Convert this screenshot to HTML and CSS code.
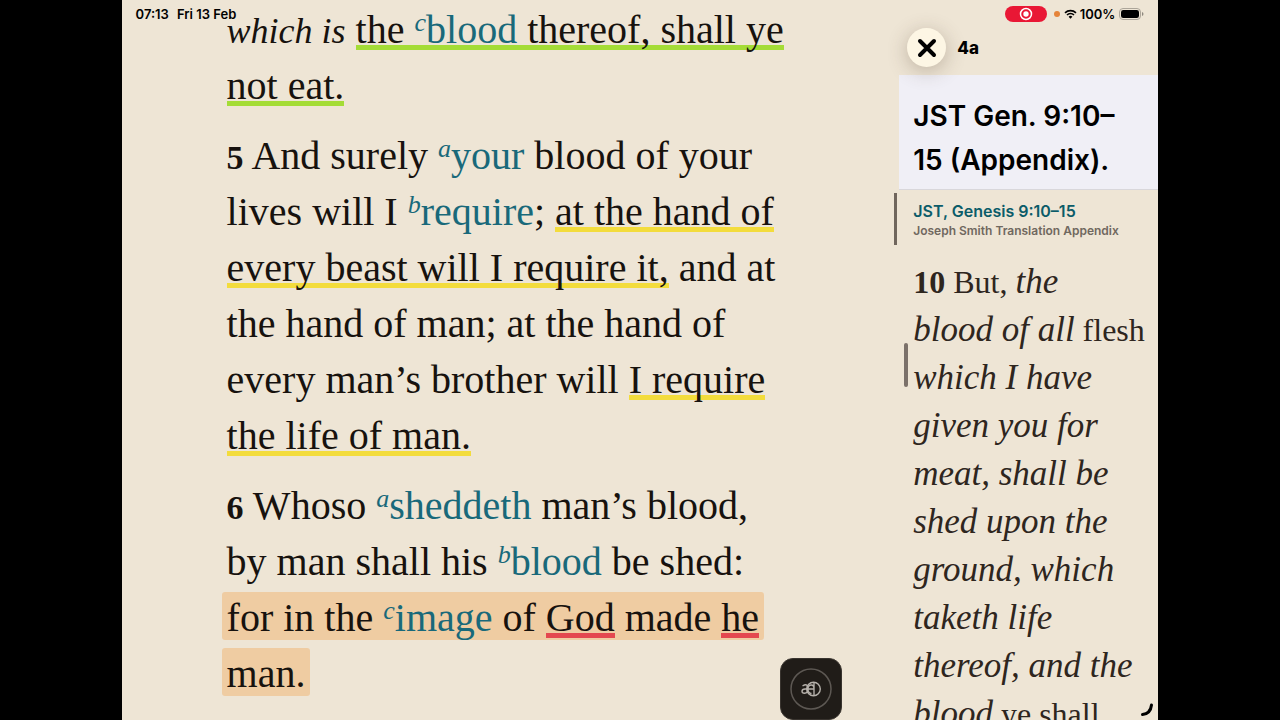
FILE: index.html
```html
<!DOCTYPE html>
<html lang="en">
<head>
    <meta charset="UTF-8">
    <meta name="viewport" content="width=device-width, initial-scale=1.0">
    <title>Genesis 9</title>
    <link rel="stylesheet" href="styles.css">
</head>
<body>
    <div class="screen">
        <div class="status-bar">
            <span class="time">07:13</span>
            <span>Fri 13 Feb</span>
            <span class="recording">
                <svg width="14" height="14" viewBox="0 0 14 14"><circle cx="7" cy="7" r="5.5" fill="none" stroke="#fff" stroke-width="1.5"/><circle cx="7" cy="7" r="2.7" fill="#fff"/></svg>
            </span>
            <span class="mic-dot"></span>
            <svg class="wifi" width="13" height="10" viewBox="0 0 13 10"><path d="M1 3.8a8 8 0 0 1 11 0M3 6a5 5 0 0 1 7 0" fill="none" stroke="#000" stroke-width="1.6"/><path d="M4.6 7.7a2.8 2.8 0 0 1 3.8 0L6.5 9.7z"/></svg>
            <span>100%</span>
            <svg class="battery" width="25" height="12" viewBox="0 0 25 12"><rect x=".5" y=".5" width="21" height="11" rx="3.5" fill="none" stroke="#aca599"/><rect x="2" y="2" width="18" height="8" rx="2.3"/><path d="M23 4v4q1.5-.6 1.5-2T23 4" fill="#8e887f"/></svg>
        </div>

        <main class="reader">
            <p class="verse"><i>which is</i> <span class="line green">the <a class="note" href="#c4"><sup>c</sup>blood</a> thereof, shall ye</span><br>
            <span class="line green">not eat.</span></p>

            <p class="verse"><b>5</b> And surely <a class="note" href="#a5"><sup>a</sup>your</a> blood of your<br>
            lives will I <a class="note" href="#b5"><sup>b</sup>require</a>; <span class="line yellow">at the hand of</span><br>
            <span class="line yellow">every beast will I require it,</span> and at<br>
            the hand of man; at the hand of<br>
            every man’s brother will <span class="line yellow">I require</span><br>
            <span class="line yellow">the life of man.</span></p>

            <p class="verse"><b>6</b> Whoso <a class="note" href="#a6"><sup>a</sup>sheddeth</a> man’s blood,<br>
            by man shall his <a class="note" href="#b6"><sup>b</sup>blood</a> be shed:<br>
            <mark>for in the <a class="note" href="#c6"><sup>c</sup>image</a> of <span class="line red">God</span> made <span class="line red">he</span></mark><br>
            <mark>man.</mark></p>
        </main>

        <aside class="panel">
            <header class="panel-bar">
                <button class="close" aria-label="Close">
                    <svg width="20" height="20" viewBox="0 0 20 20"><path d="M3 3l14 14M17 3L3 17" stroke="#000" stroke-width="4" stroke-linecap="round"/></svg>
                </button>
                <span>4a</span>
            </header>
            <h1>JST Gen. 9:10–<br>15 (Appendix).</h1>
            <div class="source">
                <a href="#jst">JST, Genesis 9:10–15</a>
                <small>Joseph Smith Translation Appendix</small>
            </div>
            <p class="passage"><b>10</b> But, <i>the<br>
            blood of all</i> flesh<br>
            <i>which I have<br>
            given you for<br>
            meat, shall be<br>
            shed upon the<br>
            ground, which<br>
            taketh life<br>
            thereof, and the<br>
            blood</i> ye shall</p>
            <span class="scrollbar"></span>
        </aside>

        <button class="assist" aria-label="Assistant">
            <svg width="42" height="42" viewBox="0 0 42 42" fill="none"><circle cx="21" cy="21" r="20" stroke="#5d5853" stroke-width="1.5"/><g stroke="#b5b0aa" stroke-width="1.4"><circle cx="23.500" cy="21" r="6.800"/><path d="M12.500 18q4-2.500 5 0v6M18 21h-3q-3 .2-3 2.200t2.500 2q3.500-.2 3.500-3.500M17 21h7q0-4-2.700-4-3.300 0-3.300 4 0 4.500 3.500 4.500M24 15v12"/></g></svg>
        </button>
        <svg class="corner" width="15" height="15" viewBox="0 0 15 15"><path d="M2.500 12.500q8-.8 9-9.500" fill="none" stroke="#000" stroke-width="3" stroke-linecap="round"/></svg>
    </div>
</body>
</html>
```
FILE: styles.css
```css
* {
    box-sizing: border-box;
}
body {
    margin: 0;
    background-color: #000;
    color: #17120e;
    font-family: Inter, "Liberation Sans", sans-serif;
}
.screen {
    position: relative;
    display: grid;
    grid-template-columns: 1fr 25%;
    width: 81%;
    height: 100vh;
    margin: 0 auto;
    overflow: hidden;
    background-color: #eee5d5;
}

/* status bar lies over the text */
.status-bar {
    position: absolute;
    z-index: 2;
    top: 0;
    left: 0;
    right: 0;
    display: flex;
    align-items: center;
    height: 28px;
    padding: 0 14px;
    color: #000;
    font-size: 13px;
    font-weight: 600;
}
.time {
    margin-right: 8px;
}
.recording {
    display: flex;
    align-items: center;
    justify-content: center;
    width: 42px;
    height: 16px;
    margin-left: auto;
    border-radius: 8px;
    background-color: #e91735;
}
.mic-dot {
    width: 6px;
    height: 6px;
    margin: 0 4px 0 7px;
    border-radius: 50%;
    background-color: #e5843a;
}
.wifi {
    margin-right: 3px;
}
.battery {
    margin-left: 4px;
}

.reader {
    padding: 2px 0 0 105px;
    font-family: "Liberation Serif", serif;
    font-size: 40px;
    line-height: 56px;
    white-space: nowrap;
}
.verse {
    margin: 0 0 14px;
}
.verse i {
    font-size: 36px;
    line-height: 0;
}
.verse b {
    font-size: 34px;
    line-height: 0;
}
.note {
    color: #19697a;
    text-decoration: none;
}
sup {
    font-size: 26px;
    font-style: italic;
    line-height: 0;
    vertical-align: 12px;
}
.line {
    background: linear-gradient(var(--ink), var(--ink)) left bottom 2px / 100% 5px no-repeat;
}
.green {
    --ink: #a4dc36;
}
.yellow {
    --ink: #f3dc3c;
}
.red {
    --ink: #e4484f;
}
mark {
    margin-left: -5px;
    padding: 3px 5px 0;
    border-radius: 3px;
    background-color: #efcca2;
    color: inherit;
}

.panel {
    position: relative;
}
.panel-bar {
    display: flex;
    align-items: center;
    gap: 11px;
    height: 75px;
    padding: 20px 8px 0;
    color: #000;
    font-size: 17px;
    font-weight: 800;
}
.close {
    display: flex;
    align-items: center;
    justify-content: center;
    width: 39px;
    height: 39px;
    padding: 0;
    border: 0;
    border-radius: 50%;
    background-color: #fdf6e4;
    box-shadow: 0 4px 20px rgba(80, 60, 40, 0.3);
}
h1 {
    margin: 0;
    padding: 19px 14px 7px;
    border-bottom: 1px solid #d9d7db;
    background-color: #f0eff6;
    color: #000;
    font-size: 28px;
    font-weight: 600;
    line-height: 44px;
    white-space: nowrap;
}
.source {
    display: flex;
    flex-direction: column;
    height: 52px;
    margin: 3px 0 0 -5px;
    padding: 7px 0 0 16px;
    border-left: 3px solid #70665d;
    white-space: nowrap;
}
.source a {
    color: #0b5c69;
    font-size: 16px;
    font-weight: 600;
    line-height: 22px;
    text-decoration: none;
}
.source small {
    color: #70685f;
    font-size: 12px;
    font-weight: 600;
    line-height: 18px;
}
.passage {
    margin: 13px 0 0;
    padding-left: 14px;
    color: #2e261e;
    font-family: "Liberation Serif", serif;
    font-size: 32px;
    line-height: 48px;
    white-space: nowrap;
}
.passage i {
    font-size: 35px;
}
.scrollbar {
    position: absolute;
    top: 343px;
    left: 5px;
    width: 4px;
    height: 44px;
    border-radius: 2px;
    background-color: #7b716a;
}

.assist {
    position: absolute;
    right: 316px;
    bottom: 0;
    display: flex;
    align-items: center;
    justify-content: center;
    width: 62px;
    height: 62px;
    padding: 0;
    border: 1px solid #39342f;
    border-radius: 13px;
    background-color: #201c18;
}
.corner {
    position: absolute;
    right: 3px;
    bottom: 3px;
}
```
